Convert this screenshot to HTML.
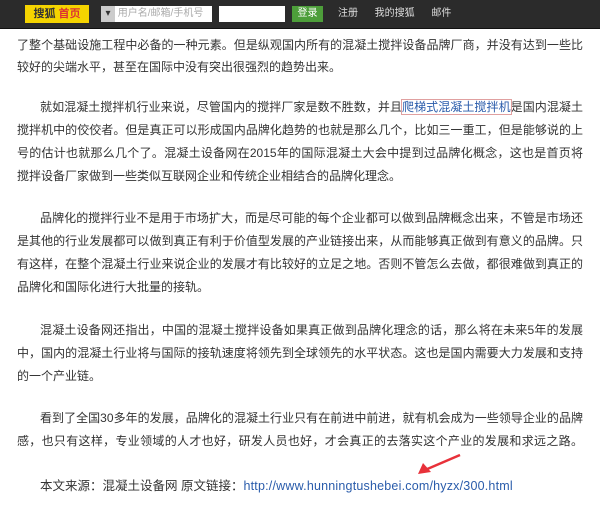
<!DOCTYPE html>
<html><head><meta charset="utf-8"><style>
body{margin:0;width:600px;height:511px;background:#fff;overflow:hidden;position:relative;font-family:"Liberation Sans","Noto Sans CJK SC",sans-serif;}
.bar{position:absolute;left:0;top:0;width:600px;height:28px;background:#2b2b2b;border-bottom:1px solid #111;}
.l{position:absolute;left:17px;font-size:12px;line-height:16px;color:#333;white-space:nowrap;}
.f{width:566px;text-align:justify;text-align-last:justify;white-space:normal;height:16px;overflow:hidden}
.i{left:40px}
.i.f{width:543px}
a{color:#2a5cab;text-decoration:none}
</style></head><body>
<div class="bar">
 <div style="position:absolute;left:25px;top:5px;width:64px;height:18px;background:#f5d400;font-size:11px;line-height:18px;text-align:center;color:#333;font-weight:bold">搜狐 <span style="color:#d33">首页</span></div>
 <div style="position:absolute;left:101px;top:6px;width:111px;height:16px;background:#fff;font-size:10px;line-height:16px;color:#aaa"><span style="display:inline-block;width:14px;height:16px;background:#ccc;color:#333;text-align:center;vertical-align:top">▾</span> 用户名/邮箱/手机号</div>
 <div style="position:absolute;left:219px;top:6px;width:66px;height:16px;background:#fff"></div>
 <div style="position:absolute;left:292px;top:6px;width:31px;height:16px;background:#4d9e3a;color:#fff;font-size:10px;line-height:16px;text-align:center">登录</div>
 <div style="position:absolute;left:338px;top:7px;font-size:10px;color:#ddd;line-height:14px;white-space:nowrap">注册&nbsp;&nbsp;&nbsp;&nbsp;&nbsp;&nbsp;我的搜狐&nbsp;&nbsp;&nbsp;&nbsp;&nbsp;&nbsp;邮件</div>
</div>
<div class="l f" style="top:37px">了整个基础设施工程中必备的一种元素。但是纵观国内所有的混凝土搅拌设备品牌厂商，并没有达到一些比</div>
<div class="l" style="top:59px">较好的尖端水平，甚至在国际中没有突出很强烈的趋势出来。</div>
<div class="l i f" style="top:99px">就如混凝土搅拌机行业来说，尽管国内的搅拌厂家是数不胜数，并且<a style="outline:1px solid #e0a0a0">爬梯式混凝土搅拌机</a>是国内混凝土</div>
<div class="l f" style="top:122px">搅拌机中的佼佼者。但是真正可以形成国内品牌化趋势的也就是那么几个，比如三一重工，但是能够说的上</div>
<div class="l f" style="top:145px">号的估计也就那么几个了。混凝土设备网在2015年的国际混凝土大会中提到过品牌化概念，这也是首页将</div>
<div class="l" style="top:168px">搅拌设备厂家做到一些类似互联网企业和传统企业相结合的品牌化理念。</div>
<div class="l i f" style="top:210px">品牌化的搅拌行业不是用于市场扩大，而是尽可能的每个企业都可以做到品牌概念出来，不管是市场还</div>
<div class="l f" style="top:233px">是其他的行业发展都可以做到真正有利于价值型发展的产业链接出来，从而能够真正做到有意义的品牌。只</div>
<div class="l f" style="top:256px">有这样，在整个混凝土行业来说企业的发展才有比较好的立足之地。否则不管怎么去做，都很难做到真正的</div>
<div class="l" style="top:279px">品牌化和国际化进行大批量的接轨。</div>
<div class="l i f" style="top:322px">混凝土设备网还指出，中国的混凝土搅拌设备如果真正做到品牌化理念的话，那么将在未来5年的发展</div>
<div class="l f" style="top:345px">中，国内的混凝土行业将与国际的接轨速度将领先到全球领先的水平状态。这也是国内需要大力发展和支持</div>
<div class="l" style="top:368px">的一个产业链。</div>
<div class="l i f" style="top:410px">看到了全国30多年的发展，品牌化的混凝土行业只有在前进中前进，就有机会成为一些领导企业的品牌</div>
<div class="l f" style="top:433px">感，也只有这样，专业领域的人才也好，研发人员也好，才会真正的去落实这个产业的发展和求远之路。</div>
<div class="l i" style="top:478px;font-size:12.5px">本文来源：混凝土设备网 原文链接：<a style="letter-spacing:0.2px">http://www.hunningtushebei.com/hyzx/300.html</a></div>
<svg style="position:absolute;left:415px;top:452px" width="50" height="25"><line x1="45" y1="3" x2="10" y2="18" stroke="#e8313a" stroke-width="2.5"/><polygon points="3,22 8,11 16,20" fill="#e8313a"/></svg>
</body></html>
